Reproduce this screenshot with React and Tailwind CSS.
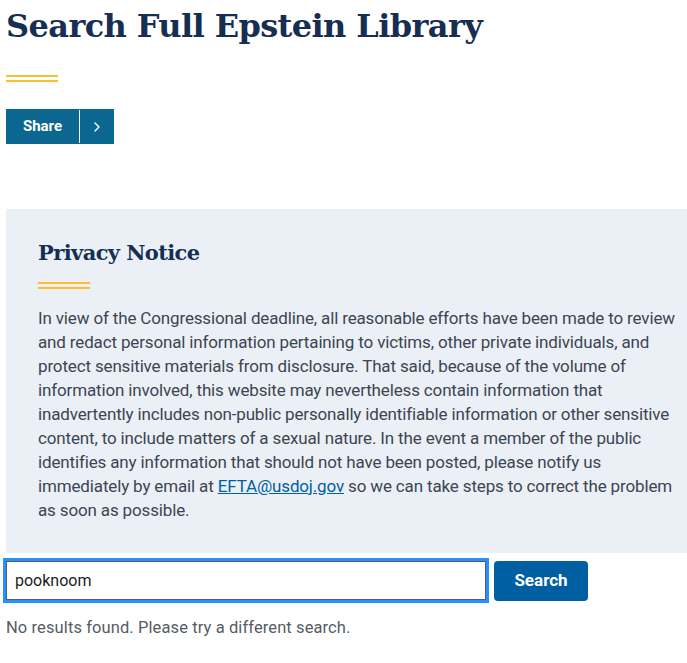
import { ChevronRight } from 'lucide-react';

export default function App() {
  return (
    <div className="min-h-screen bg-white font-['Roboto',sans-serif] text-[#1b1b1b]">
      {/* Title */}
      <div className="pl-[6px] pt-[2px]">
        <h1 className="font-['DejaVu_Serif',serif] text-[32px] font-bold leading-[48px] tracking-[-0.6px] text-[#162e51]">
          Search Full Epstein Library
        </h1>
        <div className="mt-[25px] w-[52px] space-y-[3px]">
          <div className="h-[2px] bg-[#ffbe2e]" />
          <div className="h-[2px] bg-[#ffbe2e]" />
        </div>

        {/* Share */}
        <div className="mt-[27px] flex h-[35px] w-[108px] bg-[#0b6690] text-white">
          <span className="flex w-[73px] items-center justify-center text-[15px] font-bold">Share</span>
          <span className="my-[1px] w-px bg-white" />
          <span className="flex flex-1 items-center justify-center">
            <ChevronRight className="h-4 w-4" strokeWidth={2} />
          </span>
        </div>
      </div>

      {/* Privacy notice */}
      <section className="ml-[6px] mt-[65px] bg-[#ebf0f7] pb-[31px] pl-[32px] pr-[4px] pt-[28px]">
        <h2 className="font-['DejaVu_Serif',serif] text-[21px] font-bold leading-[32px] tracking-[-0.6px] text-[#162e51]">
          Privacy Notice
        </h2>
        <div className="mt-[13px] w-[52px] space-y-[3px]">
          <div className="h-[2px] bg-[#ffbe2e]" />
          <div className="h-[2px] bg-[#ffbe2e]" />
        </div>
        <p className="mt-[17px] text-[17px] leading-[24px] tracking-[-0.15px] text-[#3d4551]">
          In view of the Congressional deadline, all reasonable efforts have been made to review<br />
          and redact personal information pertaining to victims, other private individuals, and<br />
          protect sensitive materials from disclosure. That said, because of the volume of<br />
          information involved, this website may nevertheless contain information that<br />
          inadvertently includes non-public personally identifiable information or other sensitive<br />
          content, to include matters of a sexual nature. In the event a member of the public<br />
          identifies any information that should not have been posted, please notify us<br />
          immediately by email at{' '}
          <a href="#" className="text-[#005ea2] underline">EFTA@usdoj.gov</a> so we can take
          steps to correct the problem<br />
          as soon as possible.
        </p>
      </section>

      {/* Search */}
      <div className="mt-[5px] flex items-center gap-[5px] pl-[3px]">
        <div className="w-[486px] border-[3px] border-[#2491ff]">
          <input
            defaultValue="pooknoom"
            className="h-[39px] w-full border border-[#565c65] px-[8px] text-[16px] text-[#1b1b1b] outline-none"
          />
        </div>
        <button className="h-[40px] w-[94px] rounded-[4px] bg-[#005ea2] text-[17px] font-bold text-white">
          Search
        </button>
      </div>
      <p className="mt-[13px] pl-[6px] text-[16.5px] tracking-[0.1px] text-[#565c65]">
        No results found. Please try a different search.
      </p>
    </div>
  );
}
